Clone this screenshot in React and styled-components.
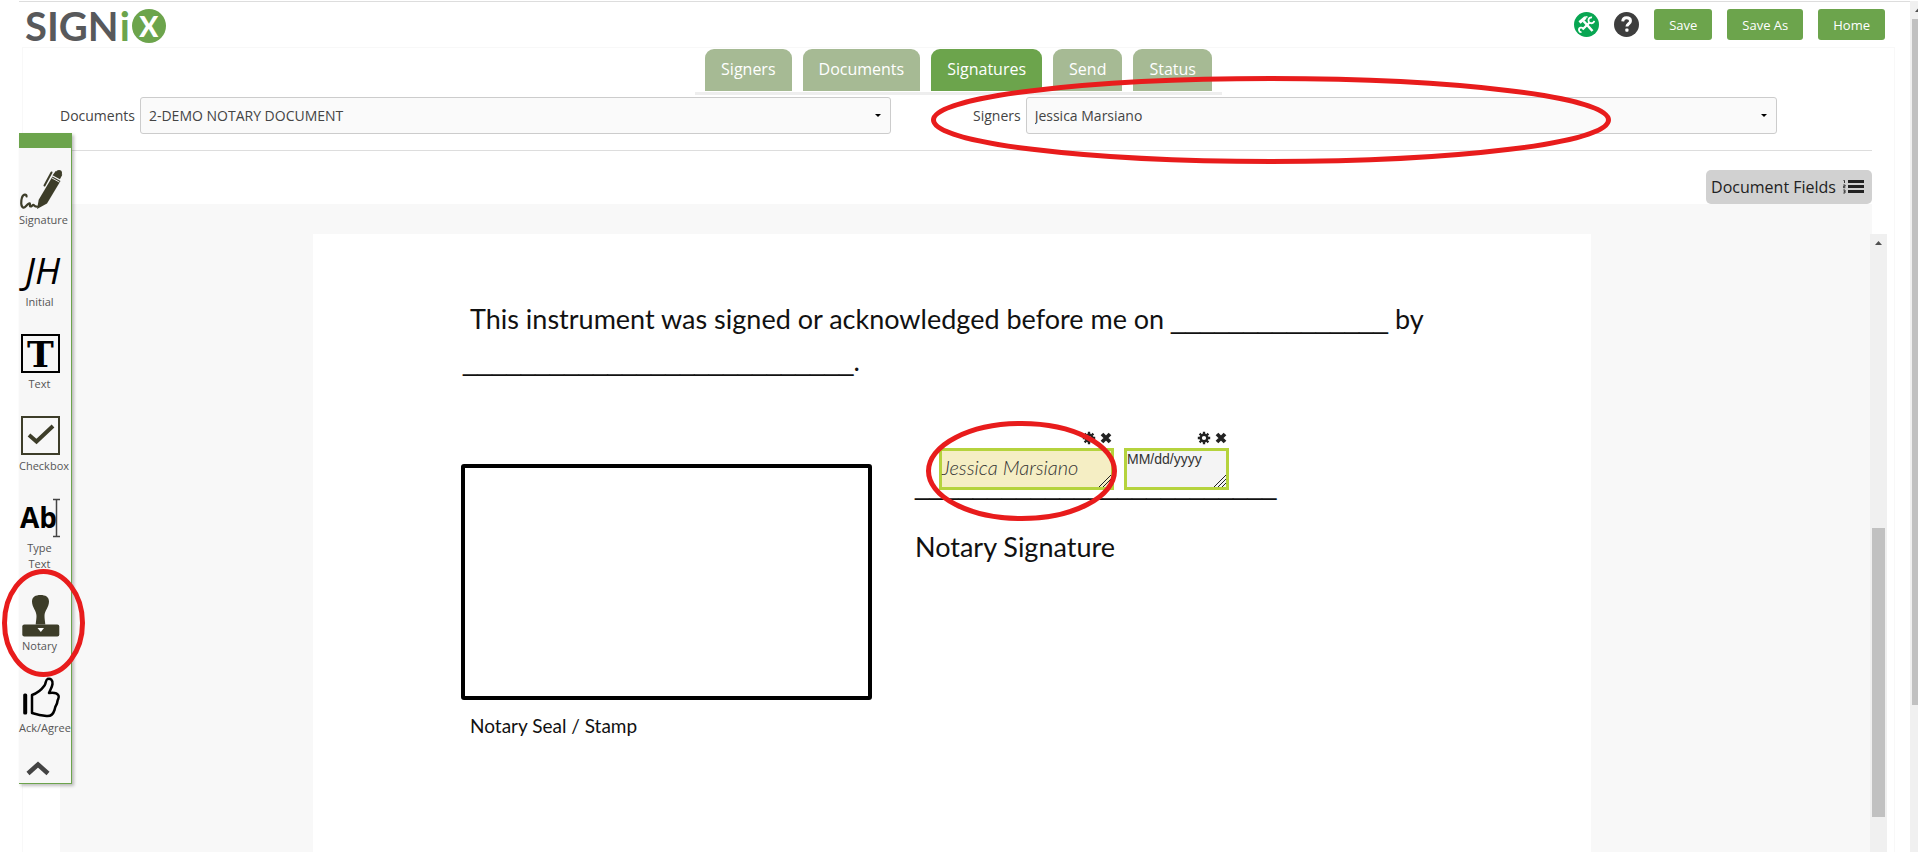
import React from "react";
import styled, { createGlobalStyle } from "styled-components";

const green = "#6ca44c";
const olive = "#3d3d29";

const GlobalStyle = createGlobalStyle`
  *, *::before, *::after { box-sizing: border-box; }
  body {
    margin: 0;
    background: #fff;
    color: #444;
    font-family: "Open Sans", "Noto Sans", sans-serif;
    font-size: 14px;
    overflow: hidden;
  }
  button, select { font: inherit; }
`;

const Shell = styled.div`
  position: relative;
  display: flex;
  min-height: 100vh;
  padding: 1px 0 0 19px;
`;
const Main = styled.div`
  flex: 1;
  display: flex;
  flex-direction: column;
  border-top: 1px solid #ddd;
`;
const Header = styled.header`
  display: flex;
  align-items: center;
  justify-content: space-between;
  height: 45px;
  padding: 0 25px 0 6px;
`;
const Logo = styled.a`
  display: flex;
  align-items: center;
  padding-top: 3px;
  color: #58595b;
  font: 700 40px/42px Lato, sans-serif;
  text-decoration: none;
  em { font-style: normal; color: ${green}; margin: 0 2px 0 1px; }
`;
const LogoDisc = styled.span`
  display: grid;
  place-items: center;
  width: 34px;
  height: 34px;
  border-radius: 50%;
  background: ${green};
  color: #fff;
  font-size: 28px;
  font-weight: 900;
  line-height: 34px;
`;
const Actions = styled.div`
  display: flex;
  align-items: center;
  gap: 15px;
`;
const IconButton = styled.button`
  display: grid;
  width: 25px;
  height: 25px;
  padding: 0;
  border: 0;
  border-radius: 50%;
  background: none;
  svg { display: block; }
`;
const ActionButton = styled.button`
  height: 31px;
  padding: 0 15px;
  border: 0;
  border-radius: 3px;
  background: ${green};
  color: #fff;
  font-size: 13px;
`;
const Panel = styled.main`
  flex: 1;
  display: flex;
  flex-direction: column;
  margin: 0 15px 0 3px;
  padding: 1px 22px 0 37px;
  border: 1px solid #f8f8f8;
  border-bottom: 0;
`;
const Tabs = styled.nav`
  display: flex;
  gap: 11px;
  align-self: center;
  margin-left: -15px;
  padding: 0 10px 1px;
  border-bottom: 3px solid #eee;
`;
const Tab = styled.a`
  height: 42px;
  padding: 0 16px;
  border-radius: 9px 9px 0 0;
  background: ${(p) => (p.$active ? green : "#a6ba94")};
  color: #fff;
  font-size: 16px;
  line-height: 40px;
  text-decoration: none;
`;
const Filters = styled.div`
  display: flex;
  gap: 82px;
  margin-top: 2px;
  padding: 0 95px 16px 0;
  border-bottom: 1px solid #ddd;
`;
const Field = styled.div`
  position: relative;
  flex: 1 1 ${(p) => p.$basis};
  display: flex;
  align-items: center;
  gap: 5px;
`;
const SelectBox = styled.div`
  position: relative;
  flex: 1;
  svg { position: absolute; right: 10px; top: 17px; pointer-events: none; }
`;
const Select = styled.select`
  display: block;
  width: 100%;
  height: 37px;
  padding: 0 24px 0 8px;
  appearance: none;
  border: 1px solid #ccc;
  border-radius: 3px;
  background: #fafafa;
  color: #444;
`;
const FieldsButton = styled.button`
  align-self: flex-end;
  display: flex;
  align-items: center;
  gap: 7px;
  height: 34px;
  margin-top: 19px;
  padding: 0 8px 0 5px;
  border: 0;
  border-radius: 5px;
  background: #d1d1d1;
  color: #222;
  font-size: 16px;
`;
const Workspace = styled.section`
  flex: 1;
  display: flex;
  padding-top: 30px;
  background: #f8f8f8;
`;
const Viewport = styled.div`
  flex: 1;
  display: flex;
  margin-right: -15px;
`;
const Sheet = styled.article`
  flex: 1;
  margin: 0 279px 0 253px;
  padding: 64px 100px 40px 148px;
  background: #fff;
  color: #111;
  font: 27px/42px Lato, sans-serif;
`;
const Blank = styled.span`
  font-family: "Liberation Sans", Arial, sans-serif;
  font-size: 26px;
  line-height: 0;
`;
const Statement = styled.p`
  margin: 0 0 82px 2px;
  text-indent: 7px;
  white-space: nowrap;
`;
const SigningRow = styled.div`
  display: flex;
  gap: 43px;
`;
const Seal = styled.figure`
  width: 411px;
  margin: 0;
`;
const SealBox = styled.div`
  height: 236px;
  border: 4px solid #000;
  border-radius: 3px;
`;
const SealCaption = styled.figcaption`
  padding: 12px 9px 0;
  font-size: 19px;
  line-height: 28px;
`;
const SignBlock = styled.div`
  position: relative;
  p { margin: 0 0 20px; }
`;
const Placed = styled.div`
  position: absolute;
  left: 24px;
  top: -33px;
  display: flex;
  gap: 10px;
`;
const PlacedField = styled.div`
  position: relative;
  width: ${(p) => p.$width};
`;
const Controls = styled.div`
  display: flex;
  justify-content: flex-end;
  gap: 4px;
  padding: 0 2px 3px;
  button {
    display: grid;
    padding: 0;
    border: 0;
    background: none;
  }
`;
const FieldFace = styled.div`
  position: relative;
  height: 42px;
  border: 3px solid #b5d33d;
  background: ${(p) => (p.$date ? "#f4f4f4" : "#f5eec4")};
  color: #333;
  font: ${(p) => (p.$date ? '14px/16px "Liberation Sans", Arial' : "italic 300 20px/32px Lato")}, sans-serif;
  white-space: nowrap;
  svg { position: absolute; right: 0; bottom: 0; }
`;
const Track = styled.div`
  flex: none;
  display: flex;
  flex-direction: column;
  width: ${(p) => p.$width};
  padding-left: 2px;
  overflow: hidden;
  background: #f0f0f0;
  svg { flex: none; margin-bottom: ${(p) => p.$offset}; }
`;
const Thumb = styled.div`
  width: 13px;
  height: ${(p) => p.$size};
  background: #c1c1c1;
`;
const Toolbar = styled.aside`
  position: absolute;
  left: 19px;
  top: 133px;
  width: 53px;
  padding-bottom: 7px;
  border: solid ${green};
  border-width: 15px 1px 1px 0;
  background: #f7f7f7;
  box-shadow: 2px 2px 3px rgba(0, 0, 0, 0.25);
`;
const ToolList = styled.ul`
  display: flex;
  flex-direction: column;
  gap: 24px;
  margin: 0;
  padding: 22px 0 24px;
  list-style: none;
`;
const ToolItem = styled.li`
  position: relative;
`;
const Tool = styled.button`
  display: block;
  width: 41px;
  padding: 0;
  border: 0;
  background: none;
  color: #555;
  font-size: 11px;
  line-height: 16px;
  text-align: center;
  svg { display: block; margin: 0 0 2px 1px; }
  span { display: block; }
`;
const Collapse = styled.button`
  display: block;
  margin-left: 7px;
  padding: 0;
  border: 0;
  background: none;
  svg { display: block; }
`;
const Ring = styled.svg`
  position: absolute;
  z-index: 2;
  left: ${(p) => p.$left};
  top: ${(p) => p.$top};
  pointer-events: none;
  overflow: visible;
`;

function Highlight({ left, top, width, height }) {
  return (
    <Ring $left={left} $top={top} width={width} height={height} aria-hidden="true">
      <ellipse cx={width / 2} cy={height / 2} rx={width / 2 - 2.5} ry={height / 2 - 2.5} fill="none" stroke="#e81c1c" strokeWidth="5" />
    </Ring>
  );
}

const Caret = () => (
  <svg width="6" height="3"><path d="M0 0h6L3 3z" fill="#000" /></svg>
);
const Grip = () => (
  <svg width="12" height="12"><path d="M0 12 12 0M4 12l8-8M8 12l4-4" stroke="#222" fill="none" /></svg>
);
const Gear = () => (
  <svg width="14" height="14" viewBox="0 0 14 14" fill="none" stroke="#222">
    <circle cx="7" cy="7" r="3.3" strokeWidth="2.4" />
    <path d="M7 .8V3M7 11v2.2M.8 7H3M11 7h2.2M2.6 2.6l1.6 1.6M9.8 9.8l1.6 1.6M2.6 11.4l1.6-1.6M9.8 4.2l1.6-1.6" strokeWidth="2.3" />
  </svg>
);
const Cross = () => (
  <svg width="12" height="14" viewBox="0 0 12 14">
    <path d="M2 3l8 8M10 3l-8 8" stroke="#222" strokeWidth="3.8" />
  </svg>
);
const ScrollUp = () => (
  <svg width="13" height="17"><path d="M3 11h7L6.500 7z" fill="#505050" /></svg>
);

function ToolsIcon() {
  return (
    <svg width="25" height="25" viewBox="0 0 25 25">
      <circle cx="12.5" cy="12.5" r="12.5" fill="#08a652" />
      <g fill="none" stroke="#fff">
        <path d="M9.500 9l9 10" strokeWidth="2.6" />
        <path d="M5.500 10.500l6-5" strokeWidth="3.200" />
        <path d="M11 5.300l2.500-.6" strokeWidth="1.500" />
        <path d="M15.500 10.500l-7 7" strokeWidth="2.300" />
        <path d="M18 5.500a2.900 2.900 0 1 0 2.200 3.300M9.400 17a2.300 2.300 0 1 0-1.900 3.200" strokeWidth="1.800" />
      </g>
    </svg>
  );
}
function HelpIcon() {
  return (
    <svg width="25" height="25" viewBox="0 0 25 25">
      <circle cx="12.5" cy="12.5" r="12.5" fill="#3e3e3e" />
      <path d="M8.700 9.300c.2-2.500 1.700-3.500 3.900-3.500 2.400 0 3.900 1.200 3.900 3.100 0 2.900-3.600 2.800-3.600 5.700" fill="none" stroke="#fff" strokeWidth="2.900" />
      <rect x="11.300" y="16.600" width="3.200" height="3.200" rx="1" fill="#fff" />
    </svg>
  );
}
function NumberedList() {
  return (
    <svg width="21" height="16" viewBox="0 0 21 16" fill="#222">
      <path d="M5 1h16v3H5zM5 6h16v3H5zM5 11h16v3H5z" />
      <path d="M.5 1.500h1V4M.3 6h1.800v1.300H.5v1.400h1.800M.3 11h1.700v3H.3M.8 12.500h1" fill="none" stroke="#222" strokeWidth=".9" />
    </svg>
  );
}

const toolArt = {
  Signature: (
    <>
      <path d="M17 39l1.700-9.300L32.500 6.500l8 4.500L27 33.500z" fill={olive} />
      <path d="M34 5l2-2.800 5 2.900L39.500 8zM31.500 2.500l-7 13" fill={olive} stroke={olive} strokeWidth="2" strokeLinecap="round" />
      <circle cx="39" cy="3" r="3" fill={olive} />
      <path d="M32 8l7.500 4.200" stroke="#f7f7f7" strokeWidth=".9" />
      <path d="M6.500 26.500c.3-2.500-3-3-4.500 1C.8 31 .8 36.500 3 37.500s3-2.500 6-4c2-.8 0 3 1.500 3s2-2 3.200-1.500c1 .5.500 1.800 3.300 1.500" fill="none" stroke={olive} strokeWidth="2.200" strokeLinecap="round" />
    </>
  ),
  Initial: (
    <text x="5" y="32" fill="#000" fontFamily="'Open Sans', sans-serif" fontStyle="italic" fontSize="37">JH</text>
  ),
  Text: (
    <>
      <rect x="2" y="1" width="37" height="37" fill="none" stroke="#000" strokeWidth="2" />
      <text x="20.500" y="33" fill="#000" textAnchor="middle" fontFamily="'DejaVu Serif', serif" fontWeight="700" fontSize="36">T</text>
    </>
  ),
  Checkbox: (
    <>
      <rect x="2" y="1" width="37" height="37" fill="none" stroke={olive} strokeWidth="2" />
      <path d="M9 19l7.500 6.500L33 10" fill="none" stroke={olive} strokeWidth="4" />
    </>
  ),
  "Type Text": (
    <>
      <text x="0" y="30" fill="#000" fontFamily="'Open Sans', sans-serif" fontWeight="700" fontSize="28">Ab</text>
      <path d="M33 1.500h7M33 38.500h7M36.500 1v38" stroke="#444" strokeWidth="1.500" />
    </>
  ),
  Notary: (
    <>
      <path d="M20.500-1c5 0 8.500 2 8.500 6.500 0 6-4.500 9-4.500 14.500 0 3 .5 5 .8 8.500h-9.600c.3-3.500.8-5.500.8-8.500 0-5.500-4.500-8.500-4.500-14.500C12 1 15.500-1 20.500-1z" fill={olive} />
      <rect x="2.300" y="28.500" width="37" height="12" rx="2" fill={olive} />
      <path d="M17.500 32h6.500l-3.200 4z" fill="#fff" />
    </>
  ),
  "Ack/Agree": (
    <>
      <rect x="3.200" y="15.500" width="4" height="21" rx="1.500" fill="#000" />
      <path d="M12 17c6-2 10-6 12.500-9.500 1.500-2 1-5.500 3-6.500 3-1.200 5.500 1.500 5 5-.4 3.500-2.500 6-3.500 9 4-.5 8-.5 9.500 2.500 1 2.500-.7 3.500-1 5.500-.2 1.800-.5 3-1.500 4.500-1 1.600-1 3-1.500 4.500-1.200 3.800-3.500 6.500-8 6-5-.5-9.500-1.500-14.500-3z" fill="none" stroke="#000" strokeWidth="2.500" strokeLinejoin="round" />
    </>
  ),
};

function DropDown({ id, label, value, basis, children }) {
  return (
    <Field $basis={basis}>
      <label htmlFor={id}>{label}</label>
      <SelectBox>
        <Select id={id} defaultValue={value}><option>{value}</option></Select>
        <Caret />
      </SelectBox>
      {children}
    </Field>
  );
}

function PlacedInput({ width, date, children }) {
  return (
    <PlacedField $width={width}>
      <Controls>
        <button aria-label="Field settings"><Gear /></button>
        <button aria-label="Remove field"><Cross /></button>
      </Controls>
      <FieldFace $date={date}>{children}<Grip /></FieldFace>
    </PlacedField>
  );
}

export default function App() {
  return (
    <Shell>
      <GlobalStyle />
      <Main>
        <Header>
          <Logo href="#home" aria-label="SIGNiX">SIGN<em>i</em><LogoDisc>X</LogoDisc></Logo>
          <Actions>
            <IconButton aria-label="Tools"><ToolsIcon /></IconButton>
            <IconButton aria-label="Help"><HelpIcon /></IconButton>
            <ActionButton>Save</ActionButton>
            <ActionButton>Save As</ActionButton>
            <ActionButton>Home</ActionButton>
          </Actions>
        </Header>
        <Panel>
          <Tabs>
            {["Signers", "Documents", "Signatures", "Send", "Status"].map((name) => (
              <Tab key={name} href={"#" + name} $active={name === "Signatures"}>{name}</Tab>
            ))}
          </Tabs>
          <Filters>
            <DropDown id="documents" label="Documents" value="2-DEMO NOTARY DOCUMENT" basis="27px" />
            <DropDown id="signers" label="Signers" value="Jessica Marsiano" basis="0px">
              <Highlight left="-42px" top="-21px" width={680} height={88} />
            </DropDown>
          </Filters>
          <FieldsButton>Document Fields <NumberedList /></FieldsButton>
          <Workspace>
            <Viewport>
              <Sheet>
                <Statement>
                  This instrument was signed or acknowledged before me on <Blank>{"_".repeat(15)}</Blank> by
                  <br />
                  <Blank>{"_".repeat(27)}</Blank>.
                </Statement>
                <SigningRow>
                  <Seal>
                    <SealBox />
                    <SealCaption>Notary Seal / Stamp</SealCaption>
                  </Seal>
                  <SignBlock>
                    <p><Blank>{"_".repeat(25)}</Blank></p>
                    <p>Notary Signature</p>
                    <Placed>
                      <PlacedInput width="175px">Jessica Marsiano</PlacedInput>
                      <PlacedInput width="105px" date>MM/dd/yyyy</PlacedInput>
                    </Placed>
                    <Highlight left="11px" top="-43px" width={191} height={100} />
                  </SignBlock>
                </SigningRow>
              </Sheet>
              <Track $width="17px" $offset="277px"><ScrollUp /><Thumb $size="289px" /></Track>
            </Viewport>
          </Workspace>
        </Panel>
      </Main>
      <Track $width="8px" $offset="1px"><ScrollUp /><Thumb $size="686px" /></Track>
      <Toolbar>
        <ToolList>
          {Object.keys(toolArt).map((name) => (
            <ToolItem key={name}>
              <Tool>
                <svg width="40" height="40" viewBox="0 0 40 40" overflow="visible">{toolArt[name]}</svg>
                <span>{name}</span>
              </Tool>
              {name === "Notary" && <Highlight left="-17px" top="-27px" width={83} height={108} />}
            </ToolItem>
          ))}
        </ToolList>
        <Collapse aria-label="Collapse toolbar">
          <svg width="24" height="16"><path d="M2 13.500l10-9 10 9" fill="none" stroke="#444" strokeWidth="4.500" /></svg>
        </Collapse>
      </Toolbar>
    </Shell>
  );
}
